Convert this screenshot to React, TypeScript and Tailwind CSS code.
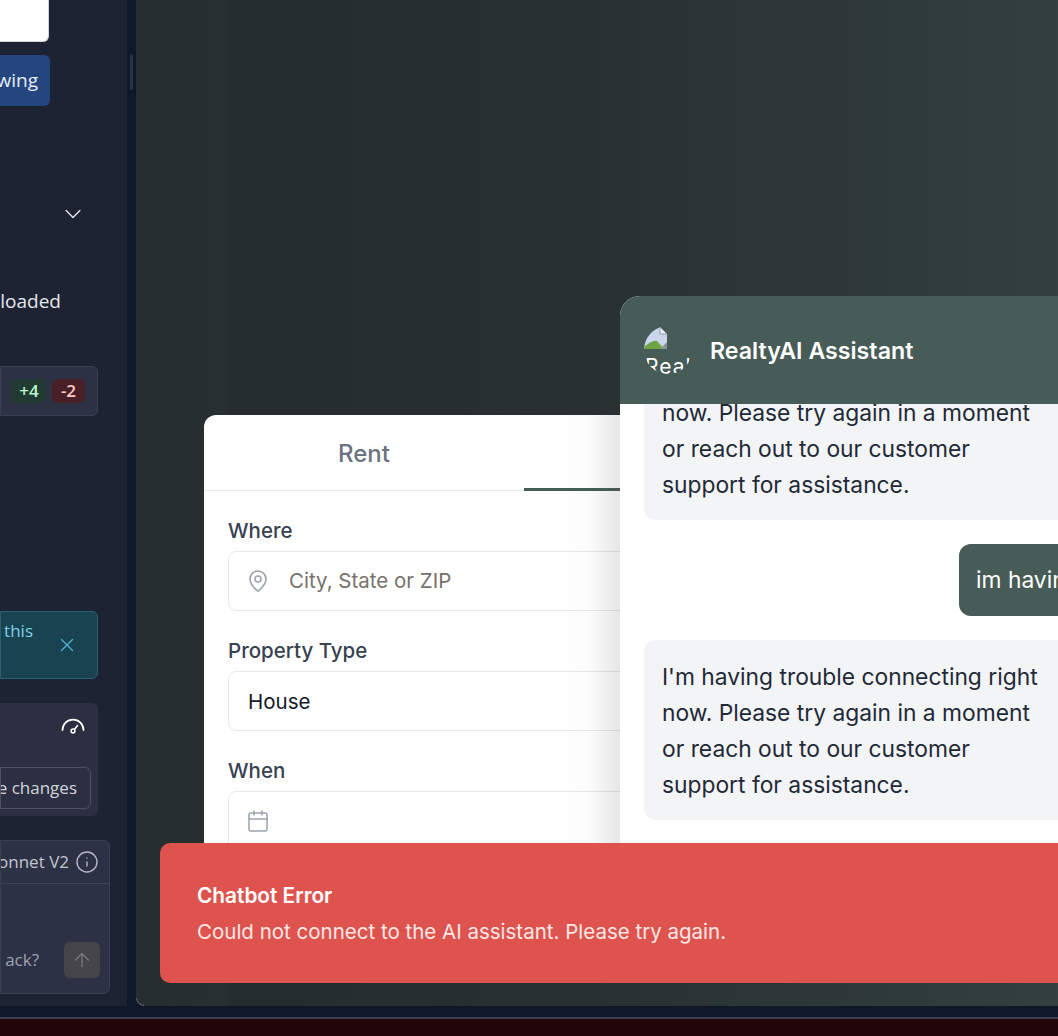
import { X, Info, ArrowUp, MapPin, Calendar } from 'lucide-react';

const BrokenImage = () => (
  <div className="relative w-[48px] h-[48px] shrink-0 overflow-hidden rounded-full">
    <svg width="24" height="23" viewBox="0 0 24 23" className="absolute left-0 top-[1px]">
      <path d="M0 0 H16 L23 7 V22 H0 Z" fill="#c9d6ee" />
      <path d="M16 0 V7 H23 Z" fill="#eef0f4" stroke="#9a9ea6" strokeWidth="1" />
      <path d="M0 22 V20 C6 15 10 13 13 14 L20 22 Z" fill="#6da544" />
      <path d="M16 22 L23 15 V22 Z" fill="#8d9296" />
    </svg>
    <span className="absolute left-[1px] top-[29px] text-white text-[21px] tracking-[1px] leading-[24px] whitespace-nowrap">Real</span>
  </div>
);

const ChevronIcon = () => (
  <svg width="22" height="22" viewBox="0 0 24 24" fill="none" stroke="#e5e7eb" strokeWidth="1.5" strokeLinecap="round" strokeLinejoin="round" className="mr-[43px] mt-[97px]">
    <path d="M19.5 8.25l-7.5 7.5-7.5-7.5" />
  </svg>
);

const GaugeIcon = () => (
  <svg width="24" height="24" viewBox="0 0 24 24" fill="none" stroke="#fff" strokeWidth="1.75" strokeLinecap="round" className="mr-[13px] mt-[11px]">
    <path d="M1.5 16 A10.5 10.5 0 0 1 22.5 16" />
    <circle cx="12" cy="17" r="1.9" strokeWidth="1.5" />
    <path d="M13.5 15.5 L16.5 11.5" strokeWidth="1.5" />
  </svg>
);

const Sidebar = () => (
  <aside className="w-[127px] h-[1006px] bg-[#1e2334] shrink-0 flex flex-col items-end overflow-hidden font-['Open_Sans','Liberation_Sans',sans-serif]">
    <div className="w-[49px] h-[42px] mr-[78px] bg-white rounded-br-[6px] border-r border-b border-[#d1d5db]" />
    <div className="w-[50px] h-[51px] mr-[77px] mt-[13px] bg-[#25457f] rounded-r-[6px] flex items-center justify-end pr-[12px] text-[#e5edf9] text-[19px] whitespace-nowrap">
      wing
    </div>
    <ChevronIcon />
    <div className="mr-[66px] mt-[63px] h-[26px] text-[#e5e7eb] text-[19px] leading-[26px] whitespace-nowrap">loaded</div>

    <div className="w-[98px] h-[50px] mr-[29px] mt-[52px] bg-[#2c3144] border border-[#3a4054] rounded-r-[6px] flex items-center justify-end gap-[6px] pr-[12px]">
      <span className="h-[24px] w-[34px] rounded-[6px] bg-[#223b32] text-[#bbf7d0] text-[17px] font-semibold flex items-center justify-center">+4</span>
      <span className="h-[24px] w-[33px] rounded-[6px] bg-[#4a2028] text-[#fecaca] text-[17px] font-semibold flex items-center justify-center">-2</span>
    </div>

    <div className="w-[98px] h-[68px] mr-[29px] mt-[195px] bg-[#1a4352] border border-[#28616f] rounded-r-[6px] relative">
      <span className="absolute right-[64px] top-[7px] text-[#7dd3e8] text-[17px] leading-[24px]">this</span>
      <X size={22} strokeWidth={1.5} className="absolute right-[19px] top-[22px] text-[#4fb3cf]" />
    </div>

    <div className="w-[98px] h-[113px] mr-[29px] mt-[24px] bg-[#2c2f42] rounded-r-[6px] flex flex-col items-end">
      <GaugeIcon />
      <div className="w-[91px] h-[42px] mr-[7px] mt-[29px] border border-[#4b5064] rounded-r-[6px] flex items-center justify-end pr-[13px] text-[#d1d5db] text-[17px] whitespace-nowrap overflow-hidden">
        e changes
      </div>
    </div>

    <div className="w-[110px] h-[154px] mr-[17px] mt-[24px] bg-[#2d3146] border border-[#3a3f54] rounded-r-[6px] flex flex-col">
      <div className="h-[43px] border-b border-[#3f4459] flex items-center justify-end pr-[10px] gap-[6px] text-[#c3c7d0] text-[17px] whitespace-nowrap overflow-hidden">
        onnet V2
        <Info size={24} strokeWidth={1.4} className="text-[#b4b8c2] shrink-0" />
      </div>
      <div className="flex-1 flex items-end justify-end pb-[15px] pr-[9px] gap-[25px] overflow-hidden">
        <span className="text-[#9ca3af] text-[17px] leading-[36px] whitespace-nowrap">ack?</span>
        <span className="w-[36px] h-[36px] rounded-[6px] bg-[#454547] flex items-center justify-center shrink-0">
          <ArrowUp size={22} strokeWidth={1.5} className="text-[#77787c]" />
        </span>
      </div>
    </div>
  </aside>
);

const Field = ({ label, children }: { label: string; children: React.ReactNode }) => (
  <div className="mb-[28px]">
    <div className="h-[24px] mb-[8px] text-[#374151] text-[20.5px] font-medium leading-[24px]">{label}</div>
    <div className="h-[60px] border border-[#e5e7eb] rounded-[8px] flex items-center bg-white">{children}</div>
  </div>
);

const SearchCard = () => (
  <div className="isolate w-[520px] h-[560px] bg-white rounded-t-[12px] overflow-hidden relative">
    <div className="relative z-10 h-[76px] border-b border-[#e5e7eb] flex">
      <div className="w-[320px] h-[76px] pt-[2px] flex items-center justify-center text-[#6b7280] text-[24px] font-medium">Rent</div>
      <div className="w-[200px] h-[76px] border-b-[3px] border-[#475b57]" />
    </div>
    <div className="pl-[24px] pt-[28px]">
      <Field label="Where">
        <MapPin size={24} strokeWidth={1.6} className="ml-[17px] text-[#9ca3af]" />
        <span className="ml-[19px] pt-[1px] text-[#78716c] text-[20.5px]">City, State or ZIP</span>
      </Field>
      <Field label="Property Type">
        <span className="ml-[19px] pt-[2px] text-[#111827] text-[20.5px]">House</span>
      </Field>
      <Field label="When">
        <Calendar size={24} strokeWidth={1.5} className="ml-[17px] text-[#9ca3af]" />
      </Field>
    </div>
    <div className="absolute right-[104px] top-0 h-full w-[60px] bg-gradient-to-r from-transparent via-black/[0.015] to-black/10" />
  </div>
);

const ChatWindow = () => (
  <div className="absolute left-[620px] top-[296px] w-[438px] h-[560px] bg-white rounded-tl-[20px] overflow-hidden">
    <div className="relative z-10 h-[108px] bg-[#475b57] flex items-center pl-[24px] gap-[18px]">
      <BrokenImage />
      <span className="pt-[2px] text-white text-[23.2px] font-semibold">RealtyAI Assistant</span>
    </div>
    <div className="h-[116px] ml-[24px] bg-[#f3f4f6] rounded-bl-[12px] pl-[18px] flex flex-col justify-end pb-[17px] text-[#1f2937] text-[22.8px] leading-[36px]">
      <div>now. Please try again in a moment</div>
      <div>or reach out to our customer</div>
      <div>support for assistance.</div>
    </div>
    <div className="mt-[24px] ml-[339px] h-[72px] bg-[#475b57] rounded-l-[12px] pl-[17px] flex items-center text-white text-[22.8px] whitespace-nowrap overflow-hidden">
      im having
    </div>
    <div className="mt-[24px] ml-[24px] h-[180px] bg-[#f3f4f6] rounded-l-[12px] pl-[18px] pt-[2px] flex flex-col justify-center text-[#1f2937] text-[22.8px] leading-[36px]">
      <div>I'm having trouble connecting right</div>
      <div>now. Please try again in a moment</div>
      <div>or reach out to our customer</div>
      <div>support for assistance.</div>
    </div>
  </div>
);

const ErrorToast = () => (
  <div className="absolute left-[160px] top-[843px] w-[898px] h-[140px] bg-[#de534e] rounded-l-[10px] flex flex-col justify-center pl-[37px] pt-[1px]">
    <div className="text-white text-[20.8px] font-semibold leading-[28px]">Chatbot Error</div>
    <div className="mt-[8px] text-[#fde8e6] text-[20.5px] leading-[28px]">Could not connect to the AI assistant. Please try again.</div>
  </div>
);

export default function App() {
  return (
    <div className="relative w-[1058px] h-[1036px] overflow-hidden bg-[#0f172a] font-['Inter','Liberation_Sans',sans-serif]">
      <div className="flex h-[1006px]">
        <Sidebar />
        <div className="w-[9px] shrink-0 relative">
          <div className="absolute left-[3px] top-[54px] w-[3px] h-[36px] rounded-full bg-[#2b3245]" />
        </div>
        <main className="relative flex-1 rounded-bl-[8px] overflow-hidden bg-gradient-to-r from-[#242c2b] via-[#283130] via-50% to-[#33403d] pl-[68px] pt-[415px]">
          <div className="absolute left-0 top-0 w-[92px] h-full bg-white/[0.015]" />
          <svg width="8" height="8" viewBox="0 0 8 8" fill="none" className="absolute left-0 bottom-0">
            <path d="M0.5 0 A7.5 7.5 0 0 0 8 7.5" stroke="#6b7280" strokeWidth="1" />
          </svg>
          <SearchCard />
        </main>
      </div>
      <div className="h-[11px] bg-[#0f172a]" />
      <div className="h-[2px] bg-[#3a3f50]" />
      <div className="h-[17px] bg-[#220508]" />
      <ChatWindow />
      <ErrorToast />
    </div>
  );
}
